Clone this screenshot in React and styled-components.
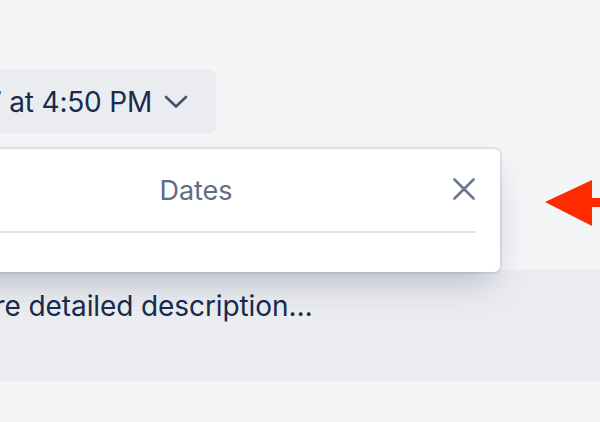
import React from "react";
import styled, { createGlobalStyle } from "styled-components";

const GlobalStyle = createGlobalStyle`
  html, body {
    margin: 0;
    padding: 0;
    background: #f4f5f7;
  }
  body {
    font-family: Inter, "Noto Sans", sans-serif;
    color: #172b4d;
  }
`;

const Page = styled.div`
  position: relative;
  width: 600px;
  height: 422px;
  overflow: hidden;
  background: #f4f5f7;
`;

const DateRow = styled.div`
  width: 216px;
  display: flex;
  justify-content: flex-end;
  padding-top: 70px;
`;

const DateButton = styled.button`
  flex-shrink: 0;
  height: 63px;
  display: flex;
  align-items: center;
  gap: 12px;
  padding: 0 28px 0 24px;
  border: none;
  border-radius: 6px;
  background: #ebecf0;
  color: #172b4d;
  font-family: Inter, "Noto Sans", sans-serif;
  font-size: 28px;
  letter-spacing: -0.2px;
  white-space: nowrap;
`;

const Description = styled.div`
  margin-top: 137px;
  height: 112px;
  box-sizing: border-box;
  padding: 16px 24px;
  margin-left: -155px;
  width: 800px;
  background: #ebecf0;
  font-size: 28px;
  line-height: 40px;
  letter-spacing: -0.1px;
  color: #172b4d;
  white-space: nowrap;
`;

const Popover = styled.div`
  position: absolute;
  top: 149px;
  left: -108px;
  width: 608px;
  height: 123px;
  box-sizing: border-box;
  background: #fff;
  border-radius: 6px;
  box-shadow: 0 16px 32px -8px rgba(9, 30, 66, 0.25), 0 0 0 2px rgba(9, 30, 66, 0.08);
  padding: 0 24px;
`;

const Header = styled.div`
  position: relative;
  height: 82px;
  display: flex;
  align-items: center;
  justify-content: center;
  border-bottom: 2px solid #dfe1e6;
`;

const Title = styled.span`
  font-size: 27px;
  color: #5e6c84;
`;

const Close = styled.button`
  position: absolute;
  right: 0;
  top: 28px;
  width: 24px;
  height: 24px;
  padding: 0;
  border: none;
  background: none;
  display: flex;
  align-items: center;
  justify-content: center;
`;

const Arrow = styled.svg`
  position: absolute;
  left: 540px;
  top: 176px;
`;

const Chevron = () => (
  <svg width="24" height="14" viewBox="0 0 24 14" fill="none">
    <path d="M2 2l10 9.5L22 2" stroke="#42526e" strokeWidth="2.6" strokeLinecap="round" strokeLinejoin="round" />
  </svg>
);

export default function App() {
  return (
    <Page>
      <GlobalStyle />
      <DateRow>
        <DateButton>
          Mar 17 at 4:50 PM
          <Chevron />
        </DateButton>
      </DateRow>
      <Description>Add a more detailed description…</Description>
      <Popover>
        <Header>
          <Title>Dates</Title>
          <Close aria-label="close">
            <svg width="22" height="22" viewBox="0 0 22 22">
              <path d="M1.5 1.5l19 19M20.5 1.5l-19 19" stroke="#6b778c" strokeWidth="2.6" strokeLinecap="round" />
            </svg>
          </Close>
        </Header>
      </Popover>
      <Arrow width="60" height="56" viewBox="0 0 60 56">
        <path d="M5 26L52 4V22H62V31H52V50Z" fill="#ff2a00" />
      </Arrow>
    </Page>
  );
}
